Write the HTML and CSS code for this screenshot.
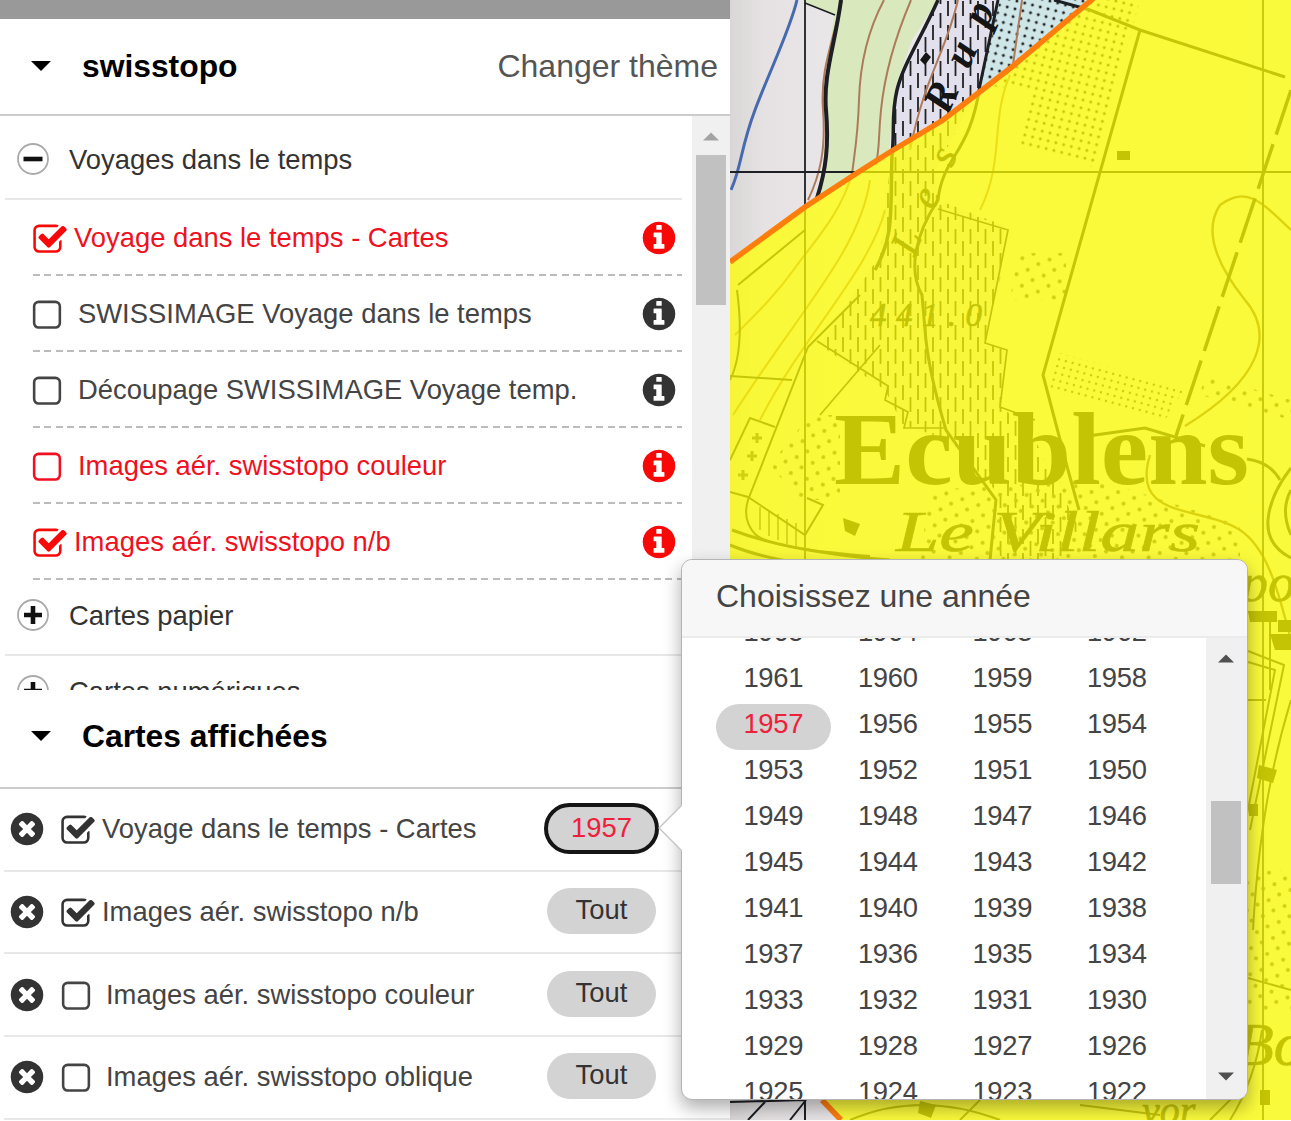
FILE: index.html
```html
<!DOCTYPE html>
<html lang="fr">
<head>
<meta charset="utf-8">
<title>swisstopo</title>
<link rel="stylesheet" href="styles.css">
</head>
<body>
<svg class="sprite" aria-hidden="true">
  <symbol id="checked" viewBox="0 0 1792 1792"><path d="M1472 930v318q0 119-84.5 203.5t-203.5 84.5h-832q-119 0-203.5-84.5t-84.5-203.5v-832q0-119 84.5-203.5t203.5-84.5h832q63 0 117 25 15 7 18 23 3 17-9 29l-49 49q-10 10-23 10-3 0-9-2-23-6-45-6h-832q-66 0-113 47t-47 113v832q0 66 47 113t113 47h832q66 0 113-47t47-113v-254q0-13 9-22l64-64q10-10 23-10 6 0 12 3 20 8 20 29zm231-489l-814 814q-24 24-57 24t-57-24l-430-430q-24-24-24-57t24-57l110-110q24-24 57-24t57 24l263 263 647-647q24-24 57-24t57 24l110 110q24 24 24 57t-24 57z"/></symbol>
  <symbol id="unchecked" viewBox="0 0 1792 1792"><path d="M1312 256h-832q-66 0-113 47t-47 113v832q0 66 47 113t113 47h832q66 0 113-47t47-113v-832q0-66-47-113t-113-47zm288 160v832q0 119-84.5 203.5t-203.5 84.5h-832q-119 0-203.5-84.5t-84.5-203.5v-832q0-119 84.5-203.5t203.5-84.5h832q119 0 203.5 84.5t84.5 203.5z"/></symbol>
  <symbol id="info" viewBox="0 0 1792 1792"><path d="M1152 1376v-160q0-14-9-23t-23-9h-96v-512q0-14-9-23t-23-9h-320q-14 0-23 9t-9 23v160q0 14 9 23t23 9h96v320h-96q-14 0-23 9t-9 23v160q0 14 9 23t23 9h448q14 0 23-9t9-23zm-128-896v-160q0-14-9-23t-23-9h-192q-14 0-23 9t-9 23v160q0 14 9 23t23 9h192q14 0 23-9t9-23zm640 416q0 209-103 385.5t-279.5 279.5-385.5 103-385.5-103-279.5-279.5-103-385.5 103-385.5 279.5-279.5 385.5-103 385.5 103 279.5 279.5 103 385.5z"/></symbol>
  <symbol id="remove" viewBox="0 0 1792 1792"><path d="M1277 1122q0-26-19-45l-181-181 181-181q19-19 19-45 0-27-19-46l-90-90q-19-19-46-19-26 0-45 19l-181 181-181-181q-19-19-45-19-27 0-46 19l-90 90q-19 19-19 46 0 26 19 45l181 181-181 181q-19 19-19 45 0 27 19 46l90 90q19 19 46 19 26 0 45-19l181-181 181 181q19 19 45 19 27 0 46-19l90-90q19-19 19-46zm387-226q0 209-103 385.5t-279.5 279.5-385.5 103-385.5-103-279.5-279.5-103-385.5 103-385.5 279.5-279.5 385.5-103 385.5 103 279.5 279.5 103 385.5z"/></symbol>
  <symbol id="plus" viewBox="0 0 32 32"><circle cx="16" cy="16" r="15" fill="#fff" stroke="#aaa" stroke-width="1.8"/><path d="M16 7v18M7 16h18" stroke="#111" stroke-width="4.6"/></symbol>
  <symbol id="minus" viewBox="0 0 32 32"><circle cx="16" cy="16" r="15" fill="#fff" stroke="#aaa" stroke-width="1.8"/><path d="M6.500 16h19" stroke="#111" stroke-width="4.600"/></symbol>
  <symbol id="caret" viewBox="0 0 20 10"><path d="M0 0h20L10 10z"/></symbol>
</svg>

<main class="app">
  <aside class="sidebar">
    <div class="topbar"></div>
    <header class="section-head first">
      <svg class="caret"><use href="#caret"/></svg>
      <h2>swisstopo</h2>
      <a class="theme">Changer thème</a>
    </header>
    <div class="catalog">
      <div class="tree">
        <div class="group"><svg class="toggle"><use href="#minus"/></svg><span>Voyages dans le temps</span></div>
        <div class="layer on red"><svg class="box"><use href="#checked"/></svg><span>Voyage dans le temps - Cartes</span><svg class="info"><use href="#info"/></svg></div>
        <div class="layer"><svg class="box"><use href="#unchecked"/></svg><span>SWISSIMAGE Voyage dans le temps</span><svg class="info"><use href="#info"/></svg></div>
        <div class="layer"><svg class="box"><use href="#unchecked"/></svg><span>Découpage SWISSIMAGE Voyage temp.</span><svg class="info"><use href="#info"/></svg></div>
        <div class="layer red"><svg class="box"><use href="#unchecked"/></svg><span>Images aér. swisstopo couleur</span><svg class="info"><use href="#info"/></svg></div>
        <div class="layer on red"><svg class="box"><use href="#checked"/></svg><span>Images aér. swisstopo n/b</span><svg class="info"><use href="#info"/></svg></div>
        <div class="group"><svg class="toggle"><use href="#plus"/></svg><span>Cartes papier</span></div>
        <div class="group last"><svg class="toggle"><use href="#plus"/></svg><span>Cartes numériques</span></div>
      </div>
      <div class="scrollbar"><svg class="sb-arrow up"><use href="#caret"/></svg><div class="thumb"></div></div>
    </div>
    <header class="section-head second">
      <svg class="caret"><use href="#caret"/></svg>
      <h2>Cartes affichées</h2>
    </header>
    <div class="shown">
      <div class="map-row on"><svg class="remove"><use href="#remove"/></svg><svg class="box"><use href="#checked"/></svg><span>Voyage dans le temps - Cartes</span><b class="pill active">1957</b></div>
      <div class="map-row on"><svg class="remove"><use href="#remove"/></svg><svg class="box"><use href="#checked"/></svg><span>Images aér. swisstopo n/b</span><b class="pill">Tout</b></div>
      <div class="map-row"><svg class="remove"><use href="#remove"/></svg><svg class="box"><use href="#unchecked"/></svg><span>Images aér. swisstopo couleur</span><b class="pill">Tout</b></div>
      <div class="map-row"><svg class="remove"><use href="#remove"/></svg><svg class="box"><use href="#unchecked"/></svg><span>Images aér. swisstopo oblique</span><b class="pill">Tout</b></div>
    </div>
  </aside>

  <svg class="map" viewBox="730 0 561 1120">
    <defs>
      <linearGradient id="paper" x1="0" x2="1"><stop offset="0" stop-color="#d8d6d6"/><stop offset=".06" stop-color="#e6e2e3"/><stop offset=".25" stop-color="#ebe8eb"/><stop offset="1" stop-color="#ecebed"/></linearGradient>
      <pattern id="marsh" width="15" height="24" patternUnits="userSpaceOnUse"><path d="M3 1v15M10.500 13v11M10.500 0v4" stroke="#222" stroke-width="1.800"/></pattern>
      <pattern id="dots" width="8" height="8" patternUnits="userSpaceOnUse" patternTransform="rotate(14)"><circle cx="3" cy="3" r="1.500" fill="#222"/></pattern>
      <pattern id="fine" width="7" height="7" patternUnits="userSpaceOnUse" patternTransform="rotate(15)"><circle cx="3" cy="3" r="1.200" fill="#333"/></pattern>
      <pattern id="orchard" width="17" height="17" patternUnits="userSpaceOnUse" patternTransform="rotate(20)"><circle cx="4" cy="4" r="2" fill="#444"/><circle cx="12" cy="12" r="2" fill="#444"/></pattern>
    </defs>
    <rect x="730" y="0" width="561" height="1120" fill="url(#paper)"/>
    <path d="M805 0H938L912 40 896 85 889 150 820 196 826 130 824 90 834 15 805 3z" fill="#d9e9bd"/>
    <path d="M938 0H998L981 85 935 170 938 200 1005 226 1000 280 985 343 1006 350 1000 406 960 450 903 425 885 390 820 345 880 255 892 150 896 90z" fill="#e3e0ee"/>
    <path d="M998 0H1080L1095 3 980 90z" fill="#cfe6e8"/>
    <path d="M938 0H998L981 85 935 170 938 200 1005 226 1000 280 985 343 1006 350 1000 406 1030 430 1080 530 1060 560H1000L995 490 950 440 903 425 885 390 820 345 880 255 892 150 896 90z" fill="url(#marsh)"/>
    <path d="M1000 0H1140L1095 168 1020 145 1030 90 980 85z" fill="url(#dots)"/>
    <path d="M1056 352L1185 388 1165 420 1050 392z" fill="url(#fine)"/>
    <g fill="url(#orchard)">
      <path d="M1018 253H1066V300H1010z"/><path d="M1205 375L1291 400V420L1200 395z"/>
      <path d="M810 415H840V500H800L770 465z"/><path d="M930 490L1100 480 1240 525V560H920z"/>
      <path d="M1225 870H1291V1010H1225z"/>
    </g>
    <g fill="none" stroke="#ad7b5b" stroke-width="2">
      <path d="M842 0C832 45 820 70 823 110S820 175 808 200M884 0C868 30 860 65 859 100S855 150 852 174M911 0C894 40 884 80 881 110S880 145 876 165M958 0C945 55 925 75 910 150M1022 0L1013 65"/>
      <path d="M852 174C840 215 815 240 795 268S755 315 735 335M870 180C860 250 800 310 733 415M885 210C870 270 800 340 760 420M1010 75C990 120 1005 160 980 210"/>
    </g>
    <path d="M1291 230C1260 200 1246 186 1220 205 1200 235 1225 275 1245 300 1275 335 1260 380 1185 426M1150 455C1130 520 1200 505 1240 530 1270 550 1280 600 1291 640" fill="none" stroke="#70503a" stroke-width="2.400"/>
    <path d="M797 0C790 30 770 70 755 110S742 165 731 190" fill="none" stroke="#4769ae" stroke-width="3"/>
    <g fill="none" stroke="#1d1f25">
      <path d="M805 0V1120M730 172H1291M1263 0V1120" stroke-width="1.800"/>
      <path d="M841 0C835 45 823 75 826 110S826 170 817 198" stroke-width="4"/>
      <path d="M938 0C920 40 903 65 897 90S895 130 892 155C890 210 895 235 875 270" stroke-width="3.500"/>
      <path d="M998 0L980 85C970 155 943 155 938 200 915 235 908 270 922 295L925 330Q928 370 946 430L996 500 990 560" stroke-width="3"/>
      <path d="M805 3L835 15M938 209L1008 230 985 343 1007 350 1000 407 1035 420M817 341L888 386 885 400 908 412 904 428H945M880 345L820 415" stroke-width="1.700"/>
      <path d="M1054 0L1090 10 1140 30 1285 77M1140 30L1043 375 1068 470 1079 510" stroke-width="3"/>
      <path d="M1088 436L1145 428 1205 446M1247 459Q1270 462 1280 480" stroke-width="3"/>
      <path d="M1291 90L1176 436" stroke-width="3.500" stroke-dasharray="47 10"/>
      <path d="M860 295L808 347 748 500Q742 520 755 534T870 556M730 380Q745 350 737 290M730 376L792 380M738 285L805 230M730 460L750 418 775 427M730 492L748 497 805 535 823 505 807 498" stroke-width="2"/>
      <path d="M732 530Q790 552 890 560M730 545Q770 562 850 570M1291 468Q1270 495 1268 520T1291 558M1291 490Q1280 510 1291 535" stroke-width="3"/>
      <path d="M760 507V530M769 510V536M778 514V540M787 519V544M796 523V546" stroke-width="1.300"/>
      <path d="M1248 651L1284 665 1250 830M1248 662L1275 670 1246 820M1291 700Q1260 800 1253 930M1270 620V690M1248 700H1266M1248 978L1291 990M1262 1030Q1255 1080 1230 1120M1210 1120L1240 1090M850 1120Q920 1090 1000 1120M960 1120L980 1100M1080 1105L1160 1115" stroke-width="2"/>
      <path d="M730 1102L805 1100V1120M748 1120L765 1102M790 1120L806 1100" stroke-width="2"/>
    </g>
    <g fill="#151515">
      <path d="M1117 151H1130V160H1117zM843 518L860 524 855 536 845 531zM920 60l6-8 5 5-6 8zM1248 611H1277V622H1250zM1270 634H1291V650H1275zM1259 765L1277 770 1273 783 1257 778zM1249 804H1258V816H1249zM1278 620H1291V632H1278zM920 1101L936 1105 931 1118 918 1113zM1260 1090H1270V1105H1260z"/>
      <text x="948" y="116" transform="rotate(-66 948 116)" class="place italic" font-size="43" textLength="117">Rup</text>
      <text x="914" y="257" transform="rotate(-67 914 257)" class="place light" font-size="40" textLength="112">Les</text>
      <text x="870" y="326" class="place light" font-size="33" textLength="112">441.0</text>
      <text x="834" y="484" class="place city" font-size="103" textLength="415" lengthAdjust="spacingAndGlyphs">Ecublens</text>
      <text x="896" y="551" class="place light" font-size="57" textLength="304" lengthAdjust="spacingAndGlyphs">Le Villars</text>
      <text x="1241" y="601" class="place light" font-size="54">po</text>
      <text x="1236" y="1065" class="place light" font-size="62">Bo</text>
      <text x="1142" y="1124" class="place light" font-size="40">vor</text>
    </g>
    <g fill="none" stroke="#444" stroke-width="3"><path d="M752 438h10m-5-5v10M747 456h10m-5-5v10M738 475h10m-5-5v10"/></g>
    <path d="M730 262L805 207 857 173 890 152 943 120 977 94 1013 66 1095-3H1291V1120H841L822 1100 730 990z" fill="#ff0" fill-opacity=".75"/>
    <path d="M730 262L805 207 857 173 890 152 943 120 977 94 1013 66 1095-3M841 1120L822 1100" fill="none" stroke="#ff7d0c" stroke-width="5.500"/>
  </svg>

  <section class="popover">
    <svg class="pointer" viewBox="0 0 24 48"><path d="M24 1L1 24 24 47" fill="#fff" stroke="#c6c6c6" stroke-width="1.500"/></svg>
    <h3>Choisissez une année</h3>
    <div class="pop-body">
      <div class="years">
        <span>1965</span><span>1964</span><span>1963</span><span>1962</span>
        <span>1961</span><span>1960</span><span>1959</span><span>1958</span>
        <span class="current">1957</span><span>1956</span><span>1955</span><span>1954</span>
        <span>1953</span><span>1952</span><span>1951</span><span>1950</span>
        <span>1949</span><span>1948</span><span>1947</span><span>1946</span>
        <span>1945</span><span>1944</span><span>1943</span><span>1942</span>
        <span>1941</span><span>1940</span><span>1939</span><span>1938</span>
        <span>1937</span><span>1936</span><span>1935</span><span>1934</span>
        <span>1933</span><span>1932</span><span>1931</span><span>1930</span>
        <span>1929</span><span>1928</span><span>1927</span><span>1926</span>
        <span>1925</span><span>1924</span><span>1923</span><span>1922</span>
      </div>
      <div class="scrollbar"><svg class="sb-arrow up"><use href="#caret"/></svg><div class="thumb"></div><svg class="sb-arrow down"><use href="#caret"/></svg></div>
    </div>
  </section>
</main>
</body>
</html>
```
FILE: styles.css
```css
* { box-sizing: border-box; }
body { margin: 0; background: #fff; color: #444; font: 27.4px/36px "Liberation Sans", Arial, sans-serif; overflow: hidden; }
svg { display: block; flex: none; fill: currentColor; }
.sprite { position: absolute; width: 0; height: 0; }
.app { position: relative; display: flex; width: 1291px; height: 1121px; overflow: hidden; }
.sidebar { width: 730px; flex: none; display: flex; flex-direction: column; white-space: nowrap; }
.topbar { height: 19px; background: #999; flex: none; }

.section-head { display: flex; align-items: center; padding: 0 12px 2px 31px; border-bottom: 2px solid #ccc; flex: none; color: #000; }
.section-head.first { height: 97px; }
.section-head.second { height: 99px; padding-bottom: 5px; }
.section-head h2 { margin: 0 0 0 31px; font-size: 31.8px; font-weight: bold; }
.caret { width: 20px; height: 10px; }
.theme { margin-left: auto; font-size: 32px; color: #555; }

.catalog { display: flex; height: 574px; overflow: hidden; flex: none; }
.tree { width: 687px; padding: 8px 5px 0; flex: none; }
.group { height: 76px; display: flex; align-items: center; padding: 0 0 2px 12px; border-bottom: 2px solid #e8e8e8; color: #333; }
.group .toggle { margin-bottom: 3px; }
.toggle { width: 32px; height: 32px; margin-right: 20px; }
.layer { height: 76px; margin-left: 28px; padding-bottom: 1px; display: flex; align-items: center; background: repeating-linear-gradient(90deg, #bbb 0 7px, transparent 7px 11.5px) left bottom / 100% 2px no-repeat; }
.box { width: 36px; height: 36px; margin: 4px 13px 0 -4px; }
.on .box { margin-left: -1px; margin-right: 6px; }
.layer .info { width: 38px; height: 38px; margin: 0 4px 0 auto; color: #333; }
.red, .red .info { color: #f01020; }
.red .info, .red.on .box { color: #f90808; }

.scrollbar { display: flex; flex-direction: column; align-items: center; background: #f0f0f0; }
.catalog .scrollbar { width: 38px; margin-left: 5px; padding-top: 16px; }
.sb-arrow { width: 16px; height: 9px; }
.up { transform: rotate(180deg); }
.catalog .sb-arrow { color: #a3a3a3; }
.thumb { width: 30px; background: #c1c1c1; }
.catalog .thumb { height: 150px; margin-top: 14px; }

.map-row { height: 82.7px; margin-left: 4px; padding: 0 0 0 4px; display: flex; align-items: center; border-bottom: 2px solid #e8e8e8; }
.remove { width: 38px; height: 38px; color: #333; }
.map-row .box { margin-left: 12px; margin-right: 12px; }
.map-row.on .box { margin-left: 14px; margin-right: 6px; color: #333; }
.pill { width: 109px; height: 46px; margin: -2px 74px 0 auto; border-radius: 23px; background: #d3d3d3; color: #333; font-weight: normal; text-align: center; line-height: 44px; }
.pill.active { width: 115px; height: 51px; margin-right: 71px; border: 4px solid #151515; border-radius: 26px; line-height: 41px; color: #f0203a; }

.map { width: 561px; height: 1120px; }
.place { font-family: "Liberation Serif", serif; }
.italic { font-style: italic; font-weight: bold; }
.light { font-style: italic; stroke: #151515; stroke-width: .7; }
.city { font-weight: bold; }

.popover { position: absolute; left: 681px; top: 559px; width: 567px; height: 541px; background: #fff; border: 1px solid #b4b4b4; border-radius: 11px; box-shadow: 0 8px 18px rgba(0, 0, 0, .32); display: flex; flex-direction: column; }
.pointer { position: absolute; left: -24px; top: 244px; width: 24px; height: 48px; }
.popover h3 { margin: 0; height: 78px; padding-left: 34px; line-height: 72px; font-size: 32px; font-weight: normal; background: #f7f7f7; border-bottom: 2px solid #ebebeb; border-radius: 10px 10px 0 0; }
.pop-body { flex: 1; min-height: 0; display: flex; justify-content: space-between; overflow: hidden; border-radius: 0 0 10px 10px; }
.years { display: grid; grid-template-columns: repeat(4, 114.5px); grid-auto-rows: 46px; margin: -26px 0 0 34px; align-self: flex-start; text-align: center; line-height: 40px; letter-spacing: -.3px; }
.years .current { background: #d3d3d3; color: #f0203a; border-radius: 23px; }
.popover .scrollbar { width: 41px; padding: 16px 1px 18px 0; color: #505050; }
.popover .thumb { height: 83px; margin-top: 138px; }
.popover .down { margin-top: auto; }
```
